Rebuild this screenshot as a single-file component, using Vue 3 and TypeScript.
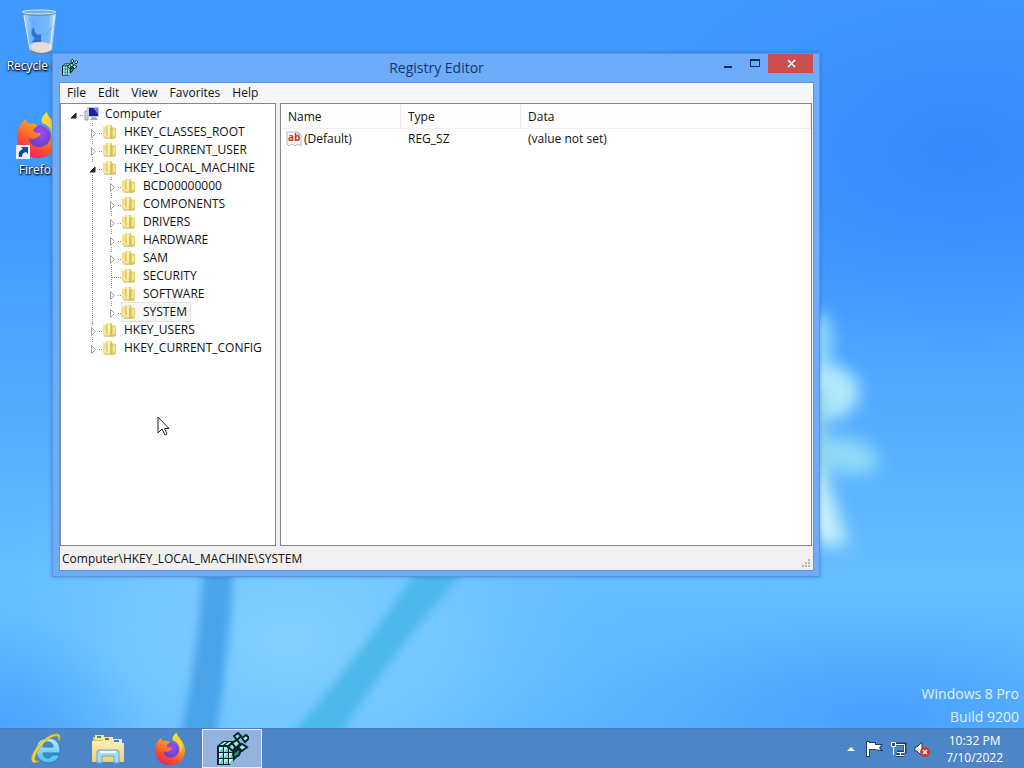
<script setup lang="ts">
import { ref } from 'vue'

type NodeState = 'open' | 'closed' | 'leaf'
interface TreeNode {
  name: string
  level: number
  state: NodeState
  last?: boolean
}

const menus = ['File', 'Edit', 'View', 'Favorites', 'Help']

const nodes: TreeNode[] = [
  { name: 'Computer', level: 0, state: 'open' },
  { name: 'HKEY_CLASSES_ROOT', level: 1, state: 'closed' },
  { name: 'HKEY_CURRENT_USER', level: 1, state: 'closed' },
  { name: 'HKEY_LOCAL_MACHINE', level: 1, state: 'open' },
  { name: 'BCD00000000', level: 2, state: 'closed' },
  { name: 'COMPONENTS', level: 2, state: 'closed' },
  { name: 'DRIVERS', level: 2, state: 'closed' },
  { name: 'HARDWARE', level: 2, state: 'closed' },
  { name: 'SAM', level: 2, state: 'closed' },
  { name: 'SECURITY', level: 2, state: 'leaf' },
  { name: 'SOFTWARE', level: 2, state: 'closed' },
  { name: 'SYSTEM', level: 2, state: 'closed', last: true },
  { name: 'HKEY_USERS', level: 1, state: 'closed' },
  { name: 'HKEY_CURRENT_CONFIG', level: 1, state: 'closed', last: true },
]
const selected = ref('SYSTEM')

const values = [{ name: '(Default)', type: 'REG_SZ', data: '(value not set)' }]

// Cube faces of the Registry Editor icon, column and row on a 3x3 front grid
const cubes = Array.from({ length: 9 }, (_, i) => ({ x: 4 + (i % 3) * 5, y: 15 + Math.floor(i / 3) * 6 }))
</script>

<template>
  <div class="screen">
    <svg class="defs" width="0" height="0" aria-hidden="true">
      <defs>
        <linearGradient id="ffBody" x1="0.8" y1="0" x2="0.3" y2="1">
          <stop offset="0" stop-color="#ffe33c" />
          <stop offset="0.4" stop-color="#ff9a1f" />
          <stop offset="0.75" stop-color="#fb4a35" />
          <stop offset="1" stop-color="#e5246c" />
        </linearGradient>
        <radialGradient id="ffGlobe" cx="0.6" cy="0.3" r="0.8">
          <stop offset="0" stop-color="#a24bf0" />
          <stop offset="1" stop-color="#4a3bb0" />
        </radialGradient>
        <linearGradient id="folderFill" x1="0" x2="1">
          <stop offset="0" stop-color="#ecd96e" />
          <stop offset="0.5" stop-color="#fbf3ae" />
          <stop offset="1" stop-color="#dfc650" />
        </linearGradient>
        <linearGradient id="ieFill" x1="0" y1="0" x2="0" y2="1">
          <stop offset="0" stop-color="#b5edff" />
          <stop offset="1" stop-color="#49bdf2" />
        </linearGradient>
        <linearGradient id="explorerFill" x1="0" y1="0" x2="0" y2="1">
          <stop offset="0" stop-color="#fdf0b4" />
          <stop offset="1" stop-color="#efce74" />
        </linearGradient>
        <linearGradient id="binFill" x1="0" x2="1">
          <stop offset="0" stop-color="#e3f3ff" stop-opacity="0.75" />
          <stop offset="0.3" stop-color="#8fc6fa" stop-opacity="0.5" />
          <stop offset="0.75" stop-color="#9fd0fb" stop-opacity="0.55" />
          <stop offset="1" stop-color="#f2faff" stop-opacity="0.85" />
        </linearGradient>
        <symbol id="firefox" viewBox="0 0 48 48">
          <circle cx="24" cy="27" r="13" fill="url(#ffGlobe)" />
          <path fill="url(#ffBody)" d="M33 1c-5 4-6 8-5 11 5 1 9 5 9 12 0 7-5 12-12 12-6 0-10-4-10-9 3 2 7 1 10-2 2-1 2-3-1-3-3 0-4-1-5-3 1-2 3-3 5-4-3-3-7-3-9-2-2-1-3-3-3-5-5 3-9 10-9 18 0 12 9 21 21 21s21-9 21-21c0-7-3-13-7-17-2-3-5-5-5-8z" />
          <path fill="#ffde3a" opacity="0.75" d="M33 1c-5 4-6 8-5 11 8 2 12 9 10 18 5-8 4-14 0-19-3-3-5-5-5-10z" />
        </symbol>
        <symbol id="regedit" viewBox="0 0 34 34">
          <path d="M2 14l6-5h15v15l-8 9H2z" fill="#04262a" />
          <path d="M20 14l3-3v4l-3 3zM20 20l3-3v4l-3 3z" fill="#2f9a97" />
          <path d="M5 13l4-3h3l-4 3zM10 13l4-3h3l-4 3zM15 13l4-3h3l-4 3z" fill="#b9f3ec" />
          <rect v-for="(c, i) in cubes" :key="i" :x="c.x" :y="c.y" width="4" height="5" fill="#69cbc5" />
          <path v-for="(c, i) in cubes" :key="'s' + i" :d="`M${c.x} ${c.y + 5}v-5h4z`" fill="#c0f5ee" />
          <g stroke="#04262a" stroke-width="2">
            <path d="M13 15l4-4 4 3-3 5z" fill="#8fe0da" />
            <path d="M18 22l4-4 4-1-2 6-5 3z" fill="#2f8c8b" />
            <path d="M17 11l5-3 3 4-4 4z" fill="#9ae6e0" />
            <path d="M23 15l4-3 5 3-5 4z" fill="#a8eee8" />
            <path d="M19 4l4-3 3 3-4 4z" fill="#8fe0da" />
            <path d="M27 6l4-3 3 3-4 4z" fill="#c1f6f0" />
          </g>
        </symbol>
      </defs>
    </svg>

    <main class="desktop">
      <svg class="wallpaper" viewBox="0 0 1024 768" preserveAspectRatio="none" aria-hidden="true">
        <defs>
          <linearGradient id="sky" x1="0" y1="0" x2="0" y2="1">
            <stop offset="0" stop-color="#3f99fe" />
            <stop offset="0.3" stop-color="#419bff" />
            <stop offset="0.6" stop-color="#58b2ff" />
            <stop offset="0.75" stop-color="#65beff" />
            <stop offset="0.95" stop-color="#5cb4ff" />
          </linearGradient>
          <radialGradient id="glow"><stop offset="0" stop-color="#84d1ff" /><stop offset="0.5" stop-color="#79caff" stop-opacity="0.7" /><stop offset="1" stop-color="#6bc2ff" stop-opacity="0" /></radialGradient>
          <radialGradient id="deep"><stop offset="0" stop-color="#469eff" /><stop offset="1" stop-color="#4ea6ff" stop-opacity="0" /></radialGradient>
          <radialGradient id="top"><stop offset="0" stop-color="#358afc" /><stop offset="1" stop-color="#3a8ffd" stop-opacity="0" /></radialGradient>
          <filter id="soft8" x="-50%" y="-50%" width="200%" height="200%"><feGaussianBlur stdDeviation="8" /></filter>
          <filter id="soft4" x="-20%" y="-20%" width="140%" height="140%"><feGaussianBlur stdDeviation="4" /></filter>
        </defs>
        <rect width="1024" height="768" fill="url(#sky)" />
        <ellipse cx="960" cy="150" rx="380" ry="230" fill="url(#top)" />
        <ellipse cx="290" cy="640" rx="330" ry="220" fill="url(#glow)" />
        <ellipse cx="880" cy="720" rx="300" ry="120" fill="url(#deep)" />
        <ellipse cx="0" cy="750" rx="150" ry="140" fill="url(#deep)" />
        <g filter="url(#soft4)">
          <path d="M204 550H233Q232 650 213 750H177Q200 650 204 550z" fill="#4aa4ea" />
          <path d="M430 550H484Q400 640 330 750H278Q366 650 430 550z" fill="#4cb9ea" />
        </g>
        <g filter="url(#soft8)">
          <ellipse cx="819" cy="342" rx="13" ry="30" fill="#93dcfb" />
          <ellipse cx="828" cy="392" rx="31" ry="27" fill="#b2e9fa" />
          <ellipse cx="846" cy="456" rx="33" ry="18" fill="#8fd9f6" transform="rotate(12 846 456)" />
          <path d="M805 440L826 475 848 545 820 545 805 520z" fill="#c4effb" />
          <rect x="800" y="390" width="26" height="80" fill="#93d4ef" />
        </g>
      </svg>

      <nav class="shortcuts" aria-label="Desktop">
        <a class="shortcut" href="#recycle-bin">
          <svg width="48" height="48" viewBox="0 0 48 48" aria-hidden="true">
            <path d="M9 5L42 5 38 44C34 48 20 48 16 44z" fill="url(#binFill)" />
            <path d="M16 38C21 34 32 34 38 38L37 43C33 47 20 47 17 43z" fill="#e8dcd6" />
            <path d="M17 43c6 4 15 4 21 0v2c-5 3-16 3-21 0z" fill="#6d7f92" />
            <path d="M20 20c-4 4-3 9 1 11l-3 4 9 0 0-8-3 1c-3-2-4-4-4-8z" fill="#2767c8" opacity="0.85" />
            <path d="M15 12l8 6M32 28l8-10" stroke="#5ea5ee" stroke-width="1" fill="none" />
            <ellipse cx="25" cy="5" rx="17" ry="2" fill="#78aee0" stroke="#d5e6f5" stroke-width="1" />
            <path d="M8 6c4 3 30 3 34 0" stroke="#5c87b8" fill="none" />
            <path d="M10 9l6 34M40 9l-4 34" stroke="#eaf6ff" stroke-width="1" opacity="0.8" />
          </svg>
          <span>Recycle Bin</span>
        </a>
        <a class="shortcut" href="#firefox">
          <svg width="48" height="48" viewBox="0 0 48 48" aria-hidden="true">
            <use href="#firefox" width="48" height="48" />
            <rect x="2" y="34" width="14" height="14" fill="#e9f1fb" />
            <path d="M5 46c-1-5 1-7 4-8l-2-2h7v7l-2-2c-3 1-4 2-4 5z" fill="#184a86" />
          </svg>
          <span>Firefox</span>
        </a>
      </nav>

      <p class="watermark">Windows 8 Pro<br />Build 9200</p>

      <section class="window" aria-label="Registry Editor">
        <header class="titlebar">
          <svg class="title-icon" width="17" height="17" aria-hidden="true"><use href="#regedit" width="17" height="17" /></svg>
          <h1>Registry Editor</h1>
          <div class="controls">
            <button class="control" aria-label="Minimize">
              <svg width="12" height="12" aria-hidden="true"><path d="M2 8h8v2H2z" fill="#0c2b5a" /></svg>
            </button>
            <button class="control" aria-label="Maximize">
              <svg width="12" height="12" aria-hidden="true"><path fill-rule="evenodd" d="M1 1h10v8H1zM2 3v5h8V3z" fill="#0c2b5a" /></svg>
            </button>
            <button class="control close" aria-label="Close">
              <svg width="12" height="12" aria-hidden="true"><path d="M3 2l7 7M10 2l-7 7" stroke="#fff" stroke-width="1.500" /></svg>
            </button>
          </div>
        </header>

        <div class="client">
          <nav class="menubar" aria-label="Menu">
            <button v-for="m in menus" :key="m">{{ m }}</button>
          </nav>

          <div class="panes">
            <ul class="tree" role="tree" aria-label="Registry keys">
              <li v-for="n in nodes" :key="n.name" role="treeitem" :aria-level="n.level + 1" :aria-selected="n.name === selected">
                <svg v-for="g in n.level" :key="g" width="19" height="18" aria-hidden="true">
                  <path v-if="g === 2" d="M8.500 0V18" class="dots" />
                </svg>
                <svg width="19" height="18" aria-hidden="true">
                  <path v-if="n.level > 0 && n.state === 'leaf'" d="M8.500 0V18M9 10.500H19" class="dots" />
                  <path v-else-if="n.level > 0" d="M8.500 0V3M15 10.500H19" class="dots" />
                  <path v-else d="M15 10.500H19" class="dots" />
                  <path v-if="n.level > 0 && !n.last && n.state !== 'leaf'" d="M8.500 16V18" class="dots" />
                  <path v-if="n.state === 'open'" d="M11 8v5H6z" fill="#222" stroke="#222" />
                  <path v-if="n.state === 'closed'" d="M7.500 6.500v8l4-4z" fill="#fff" stroke="#a2a2a2" />
                </svg>
                <button class="node" :class="{ selected: n.name === selected }" @click="selected = n.name">
                  <svg v-if="n.level === 0" width="16" height="16" aria-hidden="true">
                    <path d="M1 5h3v9H1z" fill="#cfd3da" stroke="#9a9fa8" />
                    <rect x="3" y="1" width="12" height="10" fill="#c3c8d2" />
                    <rect x="5" y="2" width="9" height="8" fill="#1b1fa8" />
                    <path d="M9 2h5v6z" fill="#6a86ee" />
                    <path d="M8 11h4l2 3H6z" fill="#a7acb6" />
                  </svg>
                  <svg v-else width="16" height="16" aria-hidden="true">
                    <path d="M0 3l4-1v12l-4-1z" fill="#efe08a" />
                    <path d="M3 1h6v14H3z" fill="url(#folderFill)" />
                    <path d="M8 3l5 1v10l-5 1z" fill="#e6d06a" />
                    <path d="M8 3v11" stroke="#c9ad3e" />
                    <path d="M4 3v10" stroke="#d9c25a" />
                    <path d="M1 9l4 5M6 2v8M11 5v7" stroke="#fdf9cf" />
                    <path d="M1 14h11" stroke="#cbbb74" />
                  </svg>
                  <span>{{ n.name }}</span>
                </button>
              </li>
            </ul>

            <div class="list">
              <table>
                <colgroup><col class="col" /><col class="col" /><col /></colgroup>
                <thead>
                  <tr><th>Name</th><th>Type</th><th>Data</th></tr>
                </thead>
                <tbody>
                  <tr v-for="v in values" :key="v.name">
                    <td>
                      <div class="value-name">
                        <svg width="16" height="16" aria-hidden="true">
                          <path d="M1 1h11l3 3v11l-3-2-3 2-3-2-3 2-2-2z" fill="#fff" stroke="#b5b5b5" />
                          <path d="M12 1v3h3" fill="none" stroke="#b5b5b5" />
                          <text x="2" y="10" font-size="10" font-weight="700" fill="#c5322b">ab</text>
                        </svg>
                        <span>{{ v.name }}</span>
                      </div>
                    </td>
                    <td>{{ v.type }}</td>
                    <td>{{ v.data }}</td>
                  </tr>
                </tbody>
              </table>
            </div>
          </div>

          <footer class="status">
            <span>Computer\HKEY_LOCAL_MACHINE\SYSTEM</span>
            <svg width="12" height="12" aria-hidden="true">
              <path d="M7 1h2v2H7zM4 4h2v2H4zM7 4h2v2H7zM1 7h2v2H1zM4 7h2v2H4zM7 7h2v2H7z" fill="#b5b5b5" />
            </svg>
          </footer>
        </div>
      </section>

      <svg class="cursor" width="13" height="20" aria-hidden="true">
        <path d="M1 1V17L5 13 8 19 10 18 7.500 12.500H12z" fill="#fff" stroke="#222" stroke-width="1" />
      </svg>
    </main>

    <footer class="taskbar">
      <button class="task" aria-label="Internet Explorer">
        <svg width="34" height="34" viewBox="0 0 34 34" aria-hidden="true">
          <path d="M31 19c0-8-4-13-12-13S7 11 7 18s5 13 12 13c6 0 10-3 11-8h-7c-1 2-2 3-4 3-3 0-5-2-5-5h17zM14 15c0-3 2-5 5-5s5 2 5 5z" fill="url(#ieFill)" stroke="#2380c8" />
          <path d="M30 9c2-4 1-8-4-7C16 4 5 16 3 25c-1 6 2 7 7 4-3 1-5 0-4-4C8 17 18 6 26 4c3-1 4 2 4 5z" fill="#f5d545" stroke="#c9a936" />
        </svg>
      </button>
      <button class="task" aria-label="File Explorer">
        <svg width="34" height="34" viewBox="0 0 34 34" aria-hidden="true">
          <path d="M2 5h10l2 2h16v22H2z" fill="#e3bf5c" />
          <path d="M4 3h9v5H4z" fill="#f6e3a0" /><path d="M6 4h4v2H6z" fill="#3e9e59" />
          <path d="M12 5h10v5H12z" fill="#f9ebb5" /><path d="M14 6h4v2h-4z" fill="#cf4b32" />
          <path d="M21 7h10v5H21z" fill="#f9ebb5" /><path d="M23 8h5v2h-5z" fill="#3d83cf" />
          <path d="M1 9h18l2 2h12v19H1z" fill="url(#explorerFill)" />
          <path d="M6 20q0-2 2-2h18q2 0 2 2v11h-5v-7H11v7H6z" fill="#a3dcf3" stroke="#5ba6cf" />
          <path d="M9 20h16" stroke="#ecfaff" stroke-width="2" />
        </svg>
      </button>
      <button class="task" aria-label="Firefox">
        <svg width="34" height="34" aria-hidden="true"><use href="#firefox" width="34" height="34" /></svg>
      </button>
      <button class="task active" aria-label="Registry Editor">
        <svg width="34" height="34" aria-hidden="true"><use href="#regedit" width="34" height="34" /></svg>
      </button>

      <div class="tray">
        <button aria-label="Show hidden icons">
          <svg width="16" height="16" aria-hidden="true"><path d="M4 10l4-4 4 4z" fill="#fff" /></svg>
        </button>
        <button aria-label="Action Center">
          <svg width="18" height="18" aria-hidden="true">
            <path d="M2 2h2v14H2zM4 3h6v2h6l-2 3 2 2-7-1H4z" fill="none" stroke="#1f3e66" stroke-width="2" />
            <path d="M2 2h2v14H2zM4 3h6v2h6l-2 3 2 2-7-1H4z" fill="#fff" />
          </svg>
        </button>
        <button aria-label="Network">
          <svg width="18" height="18" aria-hidden="true">
            <path d="M6 4h10v8H8M10 12v3M7 15.500h8" fill="none" stroke="#1f3e66" stroke-width="3" />
            <path d="M6.500 4.500h9v8H8M11.500 12v3M7 15.500h8" fill="none" stroke="#fff" />
            <path d="M2.500 2.500h4v4h-4zM4.500 7v8" fill="#33587f" stroke="#fff" />
          </svg>
        </button>
        <button aria-label="Volume muted">
          <svg width="18" height="18" aria-hidden="true">
            <path d="M2 7h2l5-5v14l-5-5H2z" fill="#fff" stroke="#1f3e66" />
            <circle cx="12" cy="12" r="5" fill="#d6312b" />
            <path d="M10 10l4 4M14 10l-4 4" stroke="#fff" stroke-width="1.500" />
          </svg>
        </button>
        <time class="clock" datetime="2022-07-10T22:32">10:32 PM<br />7/10/2022</time>
      </div>
    </footer>
  </div>
</template>

<style>
html,
body,
#app {
  height: 100%;
}
body {
  margin: 0;
  overflow: hidden;
}
</style>

<style scoped>
.screen {
  height: 100%;
  display: flex;
  flex-direction: column;
  font-family: 'Open Sans', 'Noto Sans', sans-serif;
  font-size: 12px;
  line-height: 18px;
  color: #111;
  background: #4da4f5;
}
.defs {
  position: absolute;
}
button {
  font: inherit;
  color: inherit;
  background: none;
  border: 0;
  padding: 0;
  margin: 0;
}
svg {
  display: block;
  flex: none;
}
.desktop {
  position: relative;
  flex: 1;
  min-height: 0;
  overflow: hidden;
}
.wallpaper {
  position: absolute;
  inset: 0;
  width: 100%;
  height: 100vh;
}
.shortcuts {
  position: relative;
  display: flex;
  flex-direction: column;
  gap: 32px;
  width: 76px;
  padding-top: 7px;
}
.shortcut {
  display: flex;
  flex-direction: column;
  align-items: center;
  gap: 2px;
  padding-bottom: 4px;
  color: #fff;
  text-decoration: none;
  text-shadow: 0 1px 2px #000, 1px 1px 2px #000;
  white-space: nowrap;
}
.watermark {
  position: absolute;
  right: 5px;
  bottom: 0;
  margin: 0;
  text-align: right;
  font-size: 14px;
  line-height: 23px;
  color: #dff0ff;
}
.window {
  position: absolute;
  inset: 53px 204px 151px 52px;
  box-sizing: border-box;
  display: flex;
  flex-direction: column;
  padding: 0 6px 6px 7px;
  background: #6eacf9;
  border: 1px solid #5a94dc;
  box-shadow: 0 0 4px rgba(20, 70, 140, 0.4);
}
.titlebar {
  position: relative;
  box-sizing: border-box;
  display: flex;
  align-items: center;
  justify-content: center;
  height: 29px;
  padding-bottom: 2px;
}
.title-icon {
  position: absolute;
  left: 1px;
  top: 5px;
}
h1 {
  margin: 0;
  font-size: 14px;
  font-weight: 400;
  line-height: 20px;
  color: #12386e;
}
.controls {
  position: absolute;
  right: 0;
  top: 0;
  display: flex;
}
.control {
  width: 27px;
  height: 19px;
  display: flex;
  align-items: center;
  justify-content: center;
}
.control.close {
  width: 45px;
  background: #c9504f;
}
.client {
  flex: 1;
  min-height: 0;
  display: flex;
  flex-direction: column;
  background: #f0f0f0;
  outline: 1px solid #5b97e6;
}
.menubar {
  display: flex;
  height: 20px;
  padding-left: 1px;
  background: #f5f7f8;
}
.menubar button {
  padding: 0 6px;
}
.panes {
  flex: 1;
  min-height: 0;
  display: flex;
  gap: 4px;
  padding-right: 1px;
}
.tree,
.list {
  box-sizing: border-box;
  background: #fff;
  border: 1px solid #828790;
}
.tree {
  width: 216px;
  margin: 0;
  padding: 1px 0 0 4px;
  list-style: none;
  overflow: hidden;
}
.tree li {
  display: flex;
  height: 18px;
}
.dots {
  fill: none;
  stroke: #8a8a8a;
  stroke-dasharray: 1 1;
}
.node {
  display: flex;
  align-items: center;
  box-sizing: border-box;
  height: 18px;
  gap: 5px;
  padding-right: 3px;
  white-space: nowrap;
}
.node.selected {
  background: #f8f8f8;
  box-shadow: 0 0 0 1px #e2e2e2;
}
.list {
  flex: 1;
  min-width: 0;
}
table {
  width: 100%;
  table-layout: fixed;
  border-collapse: separate;
  border-spacing: 0;
}
.col {
  width: 120px;
}
th {
  height: 25px;
  box-sizing: border-box;
  padding: 1px 0 0 7px;
  text-align: left;
  font-weight: 400;
  background: #fdfdfd;
  border-right: 1px solid #ebebeb;
  border-bottom: 1px solid #f0f0f0;
}
td {
  height: 20px;
  padding: 0 0 0 7px;
}
td:first-child {
  padding-left: 5px;
}
.value-name {
  display: flex;
  align-items: center;
  gap: 2px;
}
.status {
  display: flex;
  align-items: flex-end;
  justify-content: space-between;
  height: 24px;
  padding-left: 2px;
}
.status span {
  line-height: 22px;
}
.cursor {
  position: absolute;
  left: 157px;
  top: 416px;
}
.taskbar {
  position: relative;
  box-sizing: border-box;
  display: flex;
  align-items: center;
  gap: 2px;
  height: 40px;
  padding-left: 16px;
  background: #4c86c6;
  border-top: 1px solid #4680bf;
}
.task {
  display: flex;
  align-items: center;
  justify-content: center;
  box-sizing: border-box;
  width: 60px;
  height: 39px;
}
.task.active {
  background: #93b3dd;
  border: 1px solid #e4eefa;
}
.tray {
  display: flex;
  align-items: center;
  gap: 6px;
  margin-left: auto;
  padding-right: 21px;
  color: #fff;
}
.clock {
  margin-left: 9px;
  line-height: 17px;
  text-align: center;
}
</style>
